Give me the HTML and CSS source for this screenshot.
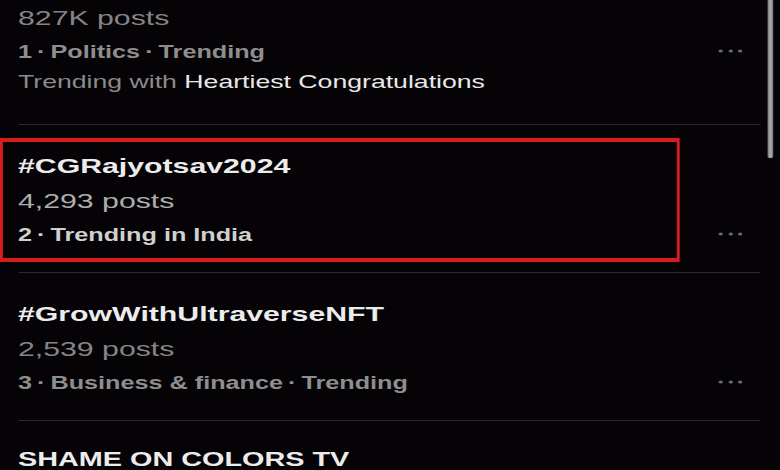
FILE: index.html
```html
<!DOCTYPE html>
<html lang="en">
<head>
    <meta charset="UTF-8" />
    <meta name="viewport" content="width=device-width, initial-scale=1" />
    <title>Trending</title>

    <link rel="stylesheet" href="styles.css">

</head>
<body>

  <div class="screen">

    <!-- Trend list -->
    <div class="feed">

      <!-- first trend, its title is scrolled out of view -->
      <div class="trend first">
        <p class="count">827K posts</p>
        <div class="meta">
          <span>1&#8201;·&#8201;Politics&#8201;·&#8201;Trending</span>
          <svg class="more" viewBox="0 0 18 4" aria-label="More">
            <circle cx="2.5" cy="2" r="1.5" />
            <circle cx="9.5" cy="2" r="1.5" />
            <circle cx="16" cy="2" r="1.5" />
          </svg>
        </div>
        <p class="context">Trending with <span class="with">Heartiest Congratulations</span></p>
      </div>

      <div class="trend marked">
        <!-- red marker drawn on top of the screenshot -->
        <div class="marker"></div>
        <p class="tag">#CGRajyotsav2024</p>
        <p class="count">4,293 posts</p>
        <div class="meta">
          <span>2&#8201;·&#8201;Trending in India</span>
          <svg class="more" viewBox="0 0 18 4" aria-label="More">
            <circle cx="2.5" cy="2" r="1.5" />
            <circle cx="9.5" cy="2" r="1.5" />
            <circle cx="16" cy="2" r="1.5" />
          </svg>
        </div>
      </div>

      <div class="trend">
        <p class="tag">#GrowWithUltraverseNFT</p>
        <p class="count">2,539 posts</p>
        <div class="meta">
          <span>3&#8201;·&#8201;Business &amp; finance&#8201;·&#8201;Trending</span>
          <svg class="more" viewBox="0 0 18 4" aria-label="More">
            <circle cx="2.5" cy="2" r="1.5" />
            <circle cx="9.5" cy="2" r="1.5" />
            <circle cx="16" cy="2" r="1.5" />
          </svg>
        </div>
      </div>

      <div class="trend last">
        <p class="tag shout">SHAME ON COLORS TV</p>
      </div>

    </div>

    <!-- Scrollbar -->
    <div class="scrollbar">
      <div class="thumb"></div>
    </div>

  </div>

</body>
</html>
```

FILE: styles.css
```css
html, body {
  margin: 0;
  padding: 0;
  height: 100%;
  overflow: hidden;
  background-color: #050306;
}
body {
  font-family: 'Liberation Sans', Arial, sans-serif;
  color: #e8e8e8;
}

/* the phone screenshot is stretched sideways */
.screen {
  width: 541.67px;
  height: 470px;
  display: flex;
  transform: scaleX(1.44);
  transform-origin: 0 0;
}

.feed {
  flex: 1;
  padding-left: 12.5px;
}

.trend {
  position: relative;
  padding: 23px 0 19px;
  border-bottom: 1px solid #2a2a2d;
}
.trend p {
  margin: 0;
}
.trend.first {
  padding-top: 0;
}
.trend.last {
  padding: 28px 0 0;
  border-bottom: none;
}

.tag {
  font-size: 21px;
  font-weight: bold;
  line-height: 35px;
  color: #ececec;
}
.tag.shout {
  font-size: 20px;
  line-height: 20px;
}

.count {
  font-size: 21px;
  line-height: 35px;
  color: #858585;
}

.meta {
  display: flex;
  justify-content: space-between;
  align-items: center;
  padding-right: 12px;
  font-size: 17.5px;
  font-weight: bold;
  line-height: 35px;
  color: #8e8e8e;
}
.more {
  width: 18px;
  height: 4px;
  margin-top: -3px;
  fill: #6c6c6c;
}

.trend .context {
  margin: -6px 0 6px;
  font-size: 18.5px;
  line-height: 35px;
  color: #8a8a8a;
}
.context .with {
  color: #e8e8e8;
}

/* highlighted trend */
.marked .count {
  color: #adadad;
}
.marked .meta {
  color: #d0d0d0;
}
.marker {
  position: absolute;
  top: 13px;
  left: -12.5px;
  width: 472px;
  height: 124px;
  box-sizing: border-box;
  border: 4px solid #dc1c1c;
  border-left-width: 2.8px;
  border-right-width: 2.8px;
}

.scrollbar {
  width: 14px;
}
.thumb {
  width: 4.6px;
  height: 168px;
  margin: -10px 0 0 5px;
  border-radius: 3px;
  background: linear-gradient(to right, #6e6e6e, #a8a8a8 40%, #a8a8a8 60%, #6e6e6e);
}
```
